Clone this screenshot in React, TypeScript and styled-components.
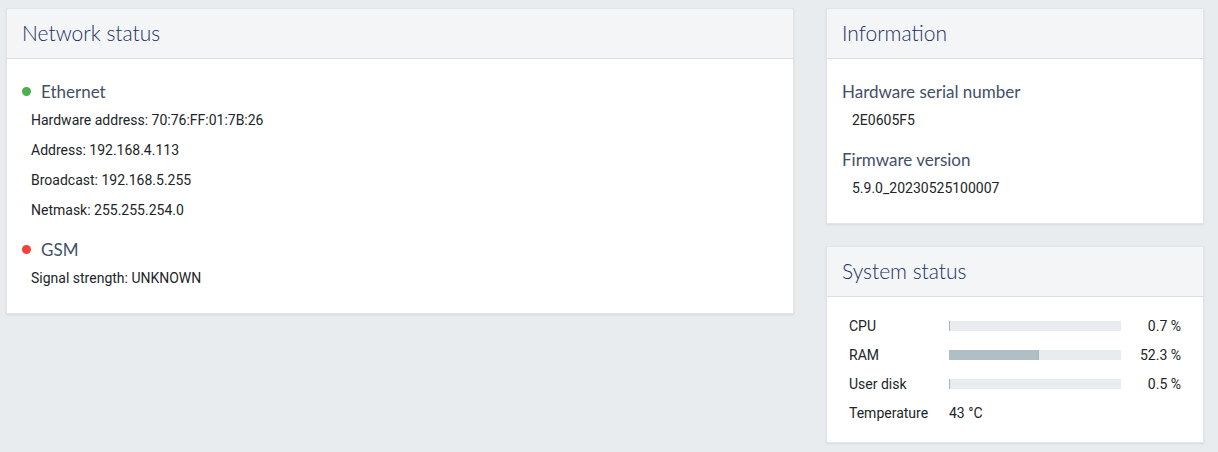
import styled, { createGlobalStyle } from "styled-components";

const GlobalStyle = createGlobalStyle`
  body {
    margin: 0;
    background: #e9ecef;
    font-family: Roboto, "Liberation Sans", sans-serif;
    color: #212529;
  }
`;

const Page = styled.div`
  display: flex;
  align-items: flex-start;
  gap: 32px;
  padding: 8px 14px 8px 6px;
`;

const Column = styled.div<{ $width: number }>`
  width: ${(p) => p.$width}px;
  display: flex;
  flex-direction: column;
  gap: 22px;
`;

const Card = styled.div`
  background: #fff;
  border: 1px solid #e1e4e8;
  box-shadow: 0 1px 2px rgba(0, 0, 0, 0.08);
`;

const CardHeader = styled.div`
  height: 50px;
  box-sizing: border-box;
  display: flex;
  align-items: center;
  padding: 0 15px 2px;
  background: #f4f5f7;
  border-bottom: 1px solid #dadde1;
  font-family: Lato, "Open Sans", sans-serif;
  font-weight: 300;
  font-size: 21px;
  color: #1a3161;
`;

const CardBody = styled.div<{ $pad?: string }>`
  padding: ${(p) => p.$pad ?? "20px 15px"};
`;

const SectionTitle = styled.div<{ $first?: boolean }>`
  display: flex;
  align-items: center;
  gap: 10px;
  height: 24px;
  margin-top: ${(p) => (p.$first ? 0 : 12)}px;
  margin-bottom: 2px;
  font-family: Lato, "Open Sans", sans-serif;
  font-size: 17px;
  color: #434f68;
`;

const Dot = styled.span<{ $color: string }>`
  flex: 0 0 auto;
  width: 9px;
  height: 9px;
  border-radius: 50%;
  background: ${(p) => p.$color};
`;

const Line = styled.div<{ $indent: number }>`
  line-height: 30px;
  font-size: 14px;
  padding-left: ${(p) => p.$indent}px;
`;

const StatGrid = styled.div`
  display: grid;
  grid-template-columns: 100px 172px 60px;
  grid-auto-rows: 29px;
  align-items: center;
  padding: 14px 23px 15px 22px;
  font-size: 14px;
`;

const Bar = styled.div`
  height: 10px;
  background: #e9ecef;
  overflow: hidden;
`;

const Fill = styled.div`
  height: 100%;
  background: #b0bec5;
  border-right: 1px solid #aab6bd;
  box-sizing: border-box;
  min-width: 1px;
`;

const Value = styled.div`
  text-align: right;
`;

const stats = [
  { label: "CPU", value: 0.7 },
  { label: "RAM", value: 52.3 },
  { label: "User disk", value: 0.5 },
];

export default function App() {
  return (
    <>
      <GlobalStyle />
      <Page>
        <Column $width={788}>
          <Card>
            <CardHeader>Network status</CardHeader>
            <CardBody $pad="20px 15px">
              <SectionTitle $first>
                <Dot $color="#4caf50" />
                Ethernet
              </SectionTitle>
              <Line $indent={9}>Hardware address: 70:76:FF:01:7B:26</Line>
              <Line $indent={9}>Address: 192.168.4.113</Line>
              <Line $indent={9}>Broadcast: 192.168.5.255</Line>
              <Line $indent={9}>Netmask: 255.255.254.0</Line>
              <SectionTitle>
                <Dot $color="#f44336" />
                GSM
              </SectionTitle>
              <Line $indent={9}>Signal strength: UNKNOWN</Line>
            </CardBody>
          </Card>
        </Column>
        <Column $width={378}>
          <Card>
            <CardHeader>Information</CardHeader>
            <CardBody>
              <SectionTitle $first>Hardware serial number</SectionTitle>
              <Line $indent={10}>2E0605F5</Line>
              <SectionTitle>Firmware version</SectionTitle>
              <Line $indent={10}>5.9.0_20230525100007</Line>
            </CardBody>
          </Card>
          <Card>
            <CardHeader>System status</CardHeader>
            <StatGrid>
              {stats.map((s) => (
                <>
                  <div key={s.label}>{s.label}</div>
                  <Bar>
                    <Fill style={{ width: `${s.value}%` }} />
                  </Bar>
                  <Value>{s.value} %</Value>
                </>
              ))}
              <div>Temperature</div>
              <div>43 °C</div>
            </StatGrid>
          </Card>
        </Column>
      </Page>
    </>
  );
}
